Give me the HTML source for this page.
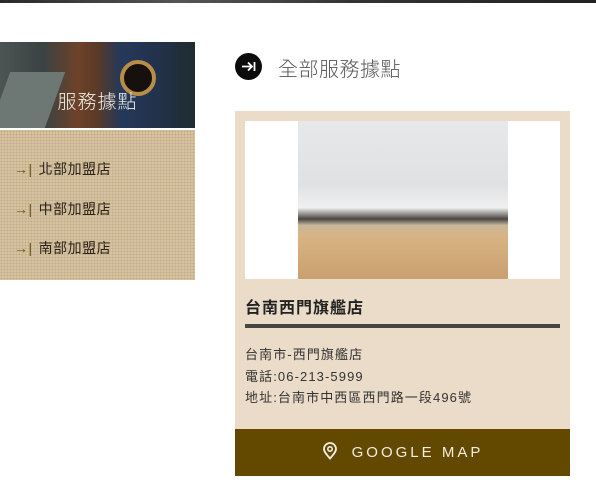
<!DOCTYPE html>
<html><head><meta charset="utf-8"><style>
body{margin:0;width:596px;height:485px;background:#fff;position:relative;overflow:hidden;font-family:"Liberation Sans","Noto Sans CJK TC",sans-serif}
.topbar{position:absolute;left:0;top:0;width:596px;height:3px;background:linear-gradient(90deg,#2a2a2a,#555 30%,#333 60%,#222)}
.banner{position:absolute;left:0;top:42px;width:195px;height:86px;background:linear-gradient(90deg,#4c5553 0%,#3a4343 22%,#6e4228 40%,#5a3a28 50%,#24395a 62%,#22324c 80%,#1f2c2e 100%);overflow:hidden}
.banner .book{position:absolute;left:0;top:30px;width:55px;height:56px;background:#6d7774;transform:skewX(-20deg)}
.banner .cup{position:absolute;left:120px;top:18px;width:36px;height:36px;border-radius:50%;border:4px solid #b98d48;background:#17110e;box-sizing:border-box}
.banner h2{position:absolute;left:0;width:195px;top:45px;margin:0;text-align:center;color:#f4efe8;font-weight:300;font-size:19px;letter-spacing:1px}
.panel{position:absolute;left:0;top:130px;width:195px;height:150px;background:#d6c3a2;background-image:radial-gradient(#c2ab85 0.8px,transparent 0.9px);background-size:3px 3px}
.panel div{position:absolute;left:14px;font-size:14px;color:#2a2118;letter-spacing:0.5px}
.panel span{color:#6b5320;margin-right:6px}
.ic{position:absolute;left:235px;top:53px;width:27px;height:27px;border-radius:50%;background:#0b0b0b}
.title{position:absolute;left:278px;top:53px;font-size:20px;font-weight:300;color:#555;letter-spacing:0.5px}
.card{position:absolute;left:235px;top:111px;width:335px;height:365px;background:#eadcc8}
.imgbox{position:absolute;left:10px;top:10px;width:315px;height:158px;background:#fff}
.photo{position:absolute;left:53px;top:0;width:210px;height:158px;background:linear-gradient(180deg,#e6e8ea 0%,#dfe1e3 40%,#efefef 55%,#4a4542 62%,#c8b79a 66%,#d8b486 72%,#d3ad7c 82%,#c9a070 100%)}
.name{position:absolute;left:10px;top:183px;font-size:16px;font-weight:bold;color:#222;letter-spacing:1px}
.line{position:absolute;left:10px;top:213px;width:315px;height:4px;background:#474544}
.info{position:absolute;left:10px;top:233px;font-size:13px;line-height:21.5px;color:#333;letter-spacing:1.1px}
.btn{position:absolute;left:0;top:318px;width:335px;height:47px;background:#634900;color:#f3ece0;font-size:15px;letter-spacing:3px;text-align:center;line-height:47px}
</style></head><body>
<div class="topbar"></div>
<div class="banner"><div class="book"></div><div class="cup"></div><h2>服務據點</h2></div>
<div class="panel">
<div style="top:29px"><span>→|</span>北部加盟店</div>
<div style="top:69px"><span>→|</span>中部加盟店</div>
<div style="top:108px"><span>→|</span>南部加盟店</div>
</div>
<div class="ic"><svg width="27" height="27" viewBox="0 0 27 27"><path d="M7 13.5h10M13 9.5l4 4-4 4M19.5 9v9" stroke="#fff" stroke-width="1.8" fill="none"/></svg></div>
<div class="title">全部服務據點</div>
<div class="card">
<div class="imgbox"><div class="photo"></div></div>
<div class="name">台南西門旗艦店</div>
<div class="line"></div>
<div class="info">台南市-西門旗艦店<br>電話:06-213-5999<br>地址:台南市中西區西門路一段496號</div>
<div class="btn"><svg width="16" height="18" viewBox="0 0 16 18" style="vertical-align:-3px;margin-right:14px"><path d="M8 16.5C4 12 2 9.5 2 7a6 6 0 0 1 12 0c0 2.5-2 5-6 9.5z" stroke="#f3ece0" stroke-width="1.8" fill="none"/><circle cx="8" cy="7" r="2.2" stroke="#f3ece0" stroke-width="1.6" fill="none"/></svg>GOOGLE MAP</div>
</div>
</body></html>
